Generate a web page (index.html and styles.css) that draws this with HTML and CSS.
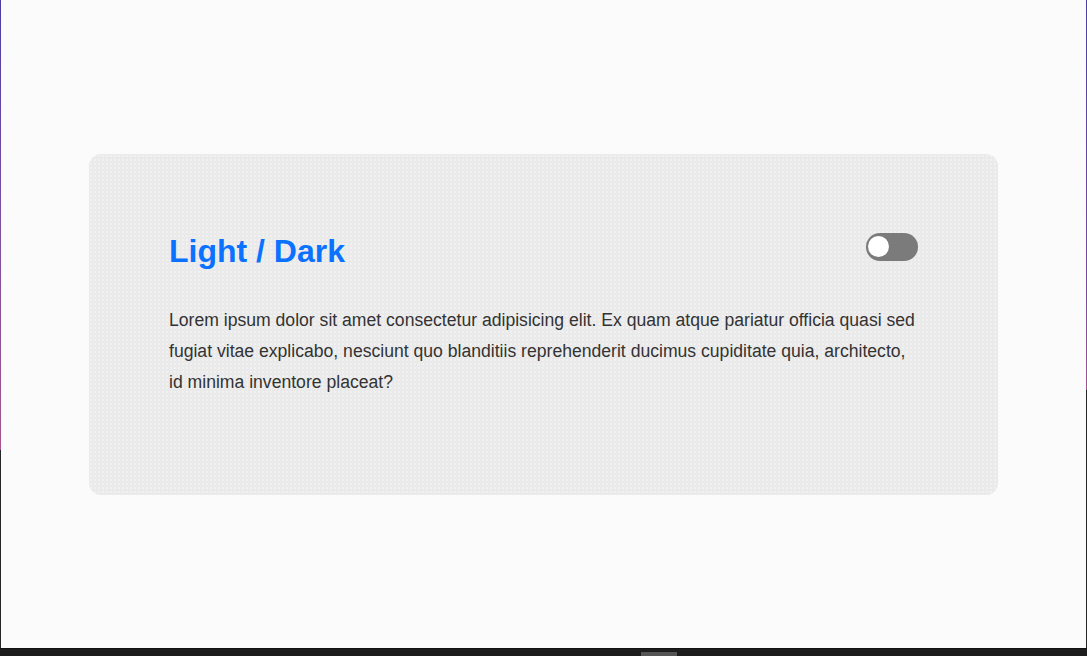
FILE: index.html
```html
<!DOCTYPE html>
<html lang="en">
<head>
<meta charset="utf-8">
<title>Light / Dark</title>
<link rel="stylesheet" href="styles.css">
</head>
<body>
  <div class="frame">
    <div class="edge edge-left"></div>
    <main class="stage">
      <section class="card">
        <header class="card-head">
          <h1 class="card-title">Light / Dark</h1>
          <button class="toggle" type="button" aria-label="Toggle theme"><span class="knob"></span></button>
        </header>
        <p class="card-text">Lorem ipsum dolor sit amet consectetur adipisicing elit. Ex quam atque pariatur officia quasi sed fugiat vitae explicabo, nesciunt quo blanditiis reprehenderit ducimus cupiditate quia, architecto, id minima inventore placeat?</p>
      </section>
    </main>
    <div class="edge edge-right"></div>
  </div>
  <div class="bar"><span class="bar-thumb"></span></div>
</body>
</html>
```

FILE: styles.css
```css
* { box-sizing: border-box; }

html, body {
  margin: 0;
  padding: 0;
}

body {
  background: #1d1d1d;
  font-family: "Liberation Sans", Arial, sans-serif;
  height: 656px;
  overflow: hidden;
}

.frame {
  display: flex;
  height: 648px;
}

.edge {
  width: 1px;
  flex: 0 0 1px;
}

.edge-left {
  background: linear-gradient(to bottom, #4a3ea6 0px, #7a4ea0 200px, #a3558f 450px, #262626 450px, #262626 100%);
}

.edge-right {
  background: linear-gradient(to bottom, #4a3ea6 0px, #7e4a9e 300px, #a0508f 390px, #262626 390px, #262626 100%);
}

.stage {
  flex: 1;
  background: #fbfbfb;
  display: flex;
  align-items: center;
  justify-content: center;
}

.card {
  width: 909px;
  height: 341px;
  background-color: #eaeaea;
  background-image: radial-gradient(circle, rgba(255,255,255,0.55) 0.6px, transparent 0.9px);
  background-size: 4px 4px;
  border-radius: 12px;
  padding: 79px 80px 0 80px;
}

.card-head {
  display: flex;
  justify-content: space-between;
  align-items: flex-start;
  margin-bottom: 36px;
}

.card-title {
  margin: 0;
  font-size: 32px;
  line-height: 1.15;
  font-weight: 700;
  color: #0b72ff;
}

.toggle {
  width: 52px;
  height: 28px;
  margin-top: 0;
  padding: 0 0 0 2px;
  border: 0;
  border-radius: 14px;
  background: #7b7b7b;
  display: flex;
  align-items: center;
  cursor: pointer;
}

.knob {
  width: 21px;
  height: 21px;
  border-radius: 50%;
  background: #ffffff;
  display: block;
}

.card-text {
  margin: 0;
  font-size: 17.6px;
  line-height: 31px;
  color: #333333;
}

.bar {
  height: 8px;
  background: #1d1d1d;
  border-top: 1px solid #111;
  display: flex;
  align-items: flex-end;
}

.bar-thumb {
  display: block;
  margin-left: 641px;
  width: 36px;
  height: 4px;
  background: #555555;
}
```
